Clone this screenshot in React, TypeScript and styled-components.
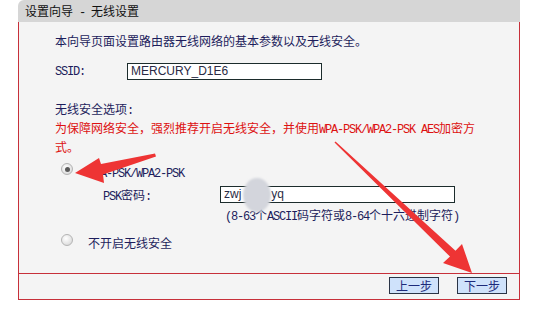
import React from "react";
import styled, { createGlobalStyle } from "styled-components";

const GlobalStyle = createGlobalStyle`
  html, body {
    margin: 0;
    padding: 0;
    background: #ffffff;
  }
  body {
    font-family: "Noto Sans CJK SC", "Liberation Sans", sans-serif;
    font-size: 12px;
  }
`;

const Page = styled.div`
  position: relative;
  width: 543px;
  height: 330px;
  padding-left: 18px;
  box-sizing: border-box;
  overflow: hidden;
`;

const Frame = styled.div`
  width: 502px;
`;

const Title = styled.div`
  height: 22px;
  line-height: 22px;
  padding-left: 7px;
  background: #d6d6d6;
  border-top-left-radius: 6px;
  color: #111111;
  font-size: 12px;
  white-space: pre;
`;

const Panel = styled.div`
  height: 251px;
  box-sizing: border-box;
  padding: 10px 0 0 36px;
  background: #f4f4f4;
  border-left: 1px solid #c7303a;
  border-right: 1px solid #c7303a;
  color: #1d1d5c;
`;

const Line = styled.div<{ $top?: number; $indent?: number; $red?: boolean; $lh?: number }>`
  height: ${(p) => p.$lh ?? 18}px;
  margin-top: ${(p) => p.$top ?? 0}px;
  padding-left: ${(p) => p.$indent ?? 0}px;
  line-height: ${(p) => p.$lh ?? 18}px;
  color: ${(p) => (p.$red ? "#dd1111" : "inherit")};
  white-space: nowrap;
`;

const Mono = styled.span`
  font-family: "Liberation Mono", "DejaVu Sans Mono", monospace;
  letter-spacing: -1.2px;
  line-height: 12px;
`;

const FieldRow = styled.div<{ $top: number; $indent?: number; $label: number }>`
  display: grid;
  grid-template-columns: ${(p) => p.$label}px auto;
  align-items: center;
  margin-top: ${(p) => p.$top}px;
  padding-left: ${(p) => p.$indent ?? 0}px;
  height: 17px;
  line-height: 17px;
`;

const Field = styled.div<{ $w: number }>`
  width: ${(p) => p.$w}px;
  height: 17px;
  box-sizing: border-box;
  border: 1px solid #1c2c2c;
  background: #ffffff;
  padding-left: 3px;
  font-family: "Liberation Sans", Arial, sans-serif;
  font-size: 12px;
  line-height: 15px;
  color: #2a2a44;
  white-space: pre;
`;

const RadioRow = styled.div<{ $top: number }>`
  display: flex;
  align-items: center;
  gap: 15px;
  margin-top: ${(p) => p.$top}px;
  padding-left: 6px;
  height: 18px;
  line-height: 18px;
`;

const RadioLabel = styled.span`
  margin-top: 6px;
  line-height: 18px;
`;

const Radio = styled.span<{ $checked?: boolean }>`
  width: 12px;
  height: 12px;
  flex: none;
  box-sizing: border-box;
  border-radius: 50%;
  border: 1px solid #b4b4b4;
  background: radial-gradient(circle at 40% 35%, #ffffff 0%, #e4e4e4 60%, #cfcfcf 100%);
  display: flex;
  align-items: center;
  justify-content: center;

  &::after {
    content: "";
    display: ${(p) => (p.$checked ? "block" : "none")};
    width: 5px;
    height: 5px;
    border-radius: 50%;
    background: #5a5a5a;
  }
`;

const Footer = styled.div`
  height: 27px;
  box-sizing: border-box;
  border: 1px solid #c7303a;
  background: #f4f4f4;
  display: flex;
  justify-content: flex-end;
  align-items: flex-start;
  gap: 18px;
  padding: 3px 12px 0 0;
`;

const Button = styled.button`
  width: 50px;
  height: 17px;
  padding: 0;
  box-sizing: border-box;
  border: 1px solid #2a3446;
  background: #cfe2fb;
  color: #1d2a7a;
  font-family: "Noto Sans CJK SC", sans-serif;
  font-size: 12px;
  line-height: 15px;
`;

const Overlay = styled.svg`
  position: absolute;
  left: 0;
  top: 0;
  pointer-events: none;
`;

export default function App() {
  return (
    <>
      <GlobalStyle />
      <Page>
        <Frame>
          <Title>
            设置向导<Mono> - </Mono>无线设置
          </Title>
          <Panel>
            <Line>本向导页面设置路由器无线网络的基本参数以及无线安全。</Line>
            <FieldRow $top={13} $label={72}>
              <Mono>SSID:</Mono>
              <Field $w={195}>MERCURY_D1E6</Field>
            </FieldRow>
            <Line $top={19} $lh={19}>
              无线安全选项<Mono>:</Mono>
            </Line>
            <Line $red $lh={19}>
              为保障网络安全，强烈推荐开启无线安全，并使用<Mono>WPA-PSK/WPA2-PSK AES</Mono>加密方
            </Line>
            <Line $red $lh={19}>
              式。
            </Line>
            <RadioRow $top={4}>
              <Radio $checked />
              <RadioLabel>
                <Mono>WPA-PSK/WPA2-PSK</Mono>
              </RadioLabel>
            </RadioRow>
            <FieldRow $top={8} $indent={48} $label={117}>
              <span>
                <Mono>PSK</Mono>密码<Mono>:</Mono>
              </span>
              <Field $w={235}>{"zwj         yq"}</Field>
            </FieldRow>
            <Line $top={3} $indent={170}>
              <Mono>(8-63</Mono>个<Mono>ASCII</Mono>码字符或<Mono>8-64</Mono>个十六进制字符<Mono>)</Mono>
            </Line>
            <RadioRow $top={7}>
              <Radio />
              <RadioLabel>不开启无线安全</RadioLabel>
            </RadioRow>
          </Panel>
          <Footer>
            <Button>上一步</Button>
            <Button>下一步</Button>
          </Footer>
        </Frame>
        <Overlay width={543} height={330} viewBox="0 0 543 330">
          <defs>
            <filter id="soft" x="-30%" y="-30%" width="160%" height="160%">
              <feGaussianBlur stdDeviation="1.2" />
            </filter>
          </defs>
          <ellipse cx={257} cy={195} rx={14} ry={17} fill="#d3d5dc" filter="url(#soft)" />
          <polygon
            points="75,173 104,183 103,174.5 156,156.5 155,153.5 101,164 99,158"
            fill="#ee3434"
          />
          <polygon
            points="472,273 443,263 450,256.6 334.5,142.6 335.5,141.4 455.5,250.8 462,244"
            fill="#ee3434"
          />
        </Overlay>
      </Page>
    </>
  );
}
